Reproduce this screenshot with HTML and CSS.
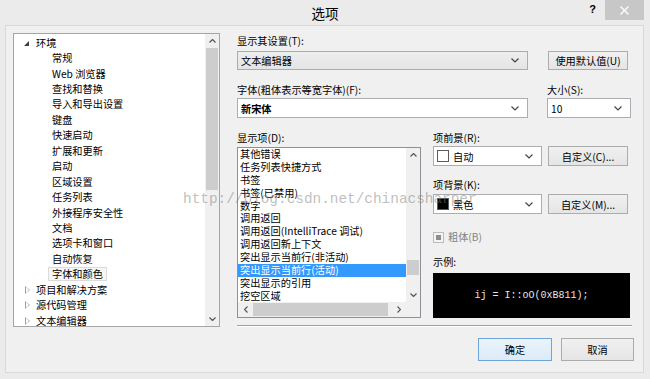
FILE: index.html
```html
<!DOCTYPE html>
<html lang="zh-CN">
<head>
    <meta charset="UTF-8">
    <title>选项</title>
    <link rel="stylesheet" href="styles.css">
</head>
<body>
    <div class="window">
        <div class="titlebar">
            <span class="title">选项</span>
            <div class="caption-buttons">
                <span class="help">?</span>
                <span class="close">
                    <svg width="9" height="9" viewBox="0 0 9 9"><path d="M0.5 0.5 L8.5 8.5 M8.5 0.5 L0.5 8.5" stroke="#fff" stroke-width="1.3" fill="none"/></svg>
                </span>
            </div>
        </div>

        <div class="client">
            <div class="main">
                <div class="tree">
                    <ul class="tree-items">
                        <li class="root"><span class="arrow open"></span>环境</li>
                        <li class="child"><span class="node">常规</span></li>
                        <li class="child"><span class="node">Web 浏览器</span></li>
                        <li class="child"><span class="node">查找和替换</span></li>
                        <li class="child"><span class="node">导入和导出设置</span></li>
                        <li class="child"><span class="node">键盘</span></li>
                        <li class="child"><span class="node">快速启动</span></li>
                        <li class="child"><span class="node">扩展和更新</span></li>
                        <li class="child"><span class="node">启动</span></li>
                        <li class="child"><span class="node">区域设置</span></li>
                        <li class="child"><span class="node">任务列表</span></li>
                        <li class="child"><span class="node">外接程序安全性</span></li>
                        <li class="child"><span class="node">文档</span></li>
                        <li class="child"><span class="node">选项卡和窗口</span></li>
                        <li class="child"><span class="node">自动恢复</span></li>
                        <li class="child"><span class="node selected">字体和颜色</span></li>
                        <li class="root"><span class="arrow closed"></span>项目和解决方案</li>
                        <li class="root"><span class="arrow closed"></span>源代码管理</li>
                        <li class="root"><span class="arrow closed"></span>文本编辑器</li>
                    </ul>
                    <div class="vscroll tree-scroll">
                        <span class="sbtn"><svg width="7" height="4" viewBox="0 0 7 4"><polyline points="0.5,3.5 3.5,0.5 6.5,3.5" stroke="#555" stroke-width="1.2" fill="none"/></svg></span>
                        <div class="track"><div class="thumb"></div></div>
                        <span class="sbtn"><svg width="7" height="4" viewBox="0 0 7 4"><polyline points="0.5,0.5 3.5,3.5 6.5,0.5" stroke="#555" stroke-width="1.2" fill="none"/></svg></span>
                    </div>
                </div>

                <div class="settings">
                    <div class="lbl">显示其设置(T):</div>
                    <div class="pair first">
                        <div class="combo gray">
                            <span>文本编辑器</span>
                            <svg width="8" height="5" viewBox="0 0 8 5"><polyline points="0.5,0.5 4,4 7.5,0.5" stroke="#444" stroke-width="1.2" fill="none"/></svg>
                        </div>
                        <button class="btn wide">使用默认值(U)</button>
                    </div>
                    <div class="pair labels">
                        <span class="lbl">字体(粗体表示等宽字体)(F):</span>
                        <span class="lbl">大小(S):</span>
                    </div>
                    <div class="pair">
                        <div class="combo tall">
                            <span class="bold">新宋体</span>
                            <svg width="8" height="5" viewBox="0 0 8 5"><polyline points="0.5,0.5 4,4 7.5,0.5" stroke="#444" stroke-width="1.2" fill="none"/></svg>
                        </div>
                        <div class="combo tall">
                            <span>10</span>
                            <svg width="8" height="5" viewBox="0 0 8 5"><polyline points="0.5,0.5 4,4 7.5,0.5" stroke="#444" stroke-width="1.2" fill="none"/></svg>
                        </div>
                    </div>

                    <div class="items">
                        <div class="items-left">
                            <div class="lbl">显示项(D):</div>
                            <div class="listbox">
                                <ul class="list-items">
                                    <li>其他错误</li>
                                    <li>任务列表快捷方式</li>
                                    <li>书签</li>
                                    <li>书签(已禁用)</li>
                                    <li>数字</li>
                                    <li>调用返回</li>
                                    <li>调用返回(IntelliTrace 调试)</li>
                                    <li>调用返回新上下文</li>
                                    <li>突出显示当前行(非活动)</li>
                                    <li class="active">突出显示当前行(活动)</li>
                                    <li>突出显示的引用</li>
                                    <li>挖空区域</li>
                                </ul>
                                <div class="vscroll list-scroll">
                                    <span class="sbtn"><svg width="7" height="4" viewBox="0 0 7 4"><polyline points="0.5,3.5 3.5,0.5 6.5,3.5" stroke="#555" stroke-width="1.2" fill="none"/></svg></span>
                                    <div class="track"><div class="thumb"></div></div>
                                    <span class="sbtn"><svg width="7" height="4" viewBox="0 0 7 4"><polyline points="0.5,0.5 3.5,3.5 6.5,0.5" stroke="#555" stroke-width="1.2" fill="none"/></svg></span>
                                </div>
                                <div class="hscroll">
                                    <span class="sbtn"><svg width="4" height="7" viewBox="0 0 4 7"><polyline points="3.5,0.5 0.5,3.5 3.5,6.5" stroke="#555" stroke-width="1.2" fill="none"/></svg></span>
                                    <div class="htrack"><div class="hthumb"></div></div>
                                    <span class="sbtn"><svg width="4" height="7" viewBox="0 0 4 7"><polyline points="0.5,0.5 3.5,3.5 0.5,6.5" stroke="#555" stroke-width="1.2" fill="none"/></svg></span>
                                </div>
                                <div class="corner"></div>
                            </div>
                        </div>

                        <div class="items-right">
                            <div class="lbl">项前景(R):</div>
                            <div class="pair-small">
                                <div class="combo">
                                    <span class="swatch"></span><span>自动</span>
                                    <svg width="8" height="5" viewBox="0 0 8 5"><polyline points="0.5,0.5 4,4 7.5,0.5" stroke="#444" stroke-width="1.2" fill="none"/></svg>
                                </div>
                                <button class="btn">自定义(C)...</button>
                            </div>
                            <div class="lbl gap-top">项背景(K):</div>
                            <div class="pair-small second">
                                <div class="combo">
                                    <span class="swatch black"></span><span>黑色</span>
                                    <svg width="8" height="5" viewBox="0 0 8 5"><polyline points="0.5,0.5 4,4 7.5,0.5" stroke="#444" stroke-width="1.2" fill="none"/></svg>
                                </div>
                                <button class="btn">自定义(M)...</button>
                            </div>
                            <div class="check disabled"><span class="box"></span>粗体(B)</div>
                            <div class="lbl sample-lbl">示例:</div>
                            <div class="sample">ij = I::oO(0xB811);</div>
                        </div>
                    </div>
                    <div class="separator"></div>
                </div>
            </div>

            <div class="footer">
                <button class="btn action default">确定</button>
                <button class="btn action">取消</button>
            </div>
        </div>

        <div class="watermark">http://blog.csdn.net/chinacsharper</div>
    </div>
</body>
</html>
```

FILE: styles.css
```css
body {
    margin: 0;
    background: #ebebeb;
    font-family: "Noto Sans CJK SC", "Noto Sans", sans-serif;
    font-size: 10.2px;
    color: #000;
}
ul {
    list-style: none;
    margin: 0;
    padding: 0;
}
.window {
    position: relative;
    width: 650px;
    height: 379px;
    background: #ebebeb;
    overflow: hidden;
}

/* title bar */
.titlebar {
    height: 25px;
    display: grid;
    grid-template-columns: 1fr auto 1fr;
}
.title {
    grid-column: 2;
    font-size: 13.5px;
    line-height: 27px;
}
.caption-buttons {
    grid-column: 3;
    justify-self: end;
    display: flex;
    align-items: flex-start;
    gap: 9px;
    margin-right: 6px;
}
.help {
    font-family: "Liberation Sans", sans-serif;
    font-weight: bold;
    font-size: 11px;
    line-height: 18px;
}
.close {
    width: 39px;
    height: 20px;
    background: #c7c7c7;
    display: flex;
    align-items: center;
    justify-content: center;
}

/* client area */
.client {
    box-sizing: border-box;
    height: 348px;
    margin: 0 6px 0 5px;
    border: 1px solid #d9d9d9;
    background: #f0f0f0;
    padding: 7px 11px 0 7px;
}
.main {
    display: grid;
    grid-template-columns: 207px 1fr;
    column-gap: 17px;
}

/* tree */
.tree {
    box-sizing: border-box;
    height: 294px;
    border: 1px solid #a5a5a5;
    background: #fff;
    display: flex;
}
.tree-items {
    flex: 1;
    padding-top: 1px;
    overflow: hidden;
}
.tree-items li {
    height: 15.44px;
    line-height: 15.44px;
    white-space: nowrap;
    display: flex;
    align-items: center;
}
.root {
    padding-left: 9px;
}
.arrow {
    width: 10px;
    height: 8px;
    margin-right: 3px;
}
.arrow.open::before {
    content: "";
    display: block;
    width: 0;
    height: 0;
    margin: 2px 0 0 1px;
    border-style: solid;
    border-width: 0 0 5px 5px;
    border-color: transparent transparent #404040 transparent;
}
.arrow.closed::before {
    content: "";
    display: block;
    width: 0;
    height: 0;
    margin: 0 0 0 2px;
    border-style: solid;
    border-width: 4px 0 4px 5px;
    border-color: transparent transparent transparent #a0a0a0;
}
.arrow.closed::after {
    content: "";
    display: block;
    width: 0;
    height: 0;
    margin: -7px 0 0 3px;
    border-style: solid;
    border-width: 3px 0 3px 3px;
    border-color: transparent transparent transparent #fff;
}
.child {
    padding-left: 34px;
}
.node {
    display: inline-block;
    line-height: 12px;
    padding: 0 3px;
    border: 1px solid transparent;
}
.node.selected {
    border-color: #dadada;
    background: #f6f6f6;
}

/* scroll bars */
.vscroll {
    width: 14px;
    background: #f0f0f0;
    display: flex;
    flex-direction: column;
}
.sbtn {
    flex: none;
    height: 14px;
    display: flex;
    align-items: center;
    justify-content: center;
}
.track {
    flex: 1;
}
.thumb {
    margin: 0 1px;
    background: #cdcdcd;
}
.tree-scroll .thumb {
    height: 142px;
}
.list-scroll .thumb {
    margin-top: 98px;
    height: 15px;
}
.hscroll {
    grid-column: 1;
    grid-row: 2;
    background: #f0f0f0;
    display: flex;
}
.hscroll .sbtn {
    width: 15px;
    height: 15px;
}
.htrack {
    flex: 1;
    padding: 1px 0;
}
.hthumb {
    width: 135px;
    height: 13px;
    background: #cdcdcd;
}
.corner {
    grid-column: 2;
    grid-row: 2;
    background: #f0f0f0;
}

/* settings */
.lbl {
    line-height: 16px;
    white-space: nowrap;
}
.pair {
    display: grid;
    grid-template-columns: 291px 84px;
    column-gap: 19px;
}
.pair.first {
    margin-top: 2px;
}
.pair.labels {
    margin-top: 12px;
}
.combo {
    box-sizing: border-box;
    height: 20px;
    border: 1px solid #abadb3;
    background: #fff;
    display: flex;
    align-items: center;
    padding: 0 8px 0 3px;
    white-space: nowrap;
}
.combo span:last-of-type {
    flex: 1;
}
.combo.gray {
    height: 19px;
    border-color: #acacac;
    background: linear-gradient(#eeeeee, #e4e4e4);
}
.bold {
    font-weight: bold;
}
.btn {
    box-sizing: border-box;
    height: 20px;
    padding: 0;
    border: 1px solid #acacac;
    background: linear-gradient(#f0f0f0, #e5e5e5);
    font-family: inherit;
    font-size: inherit;
    color: #000;
}
.btn.wide {
    width: 80px;
    height: 19px;
    margin-left: 1px;
}

.items {
    margin-top: 12px;
    display: grid;
    grid-template-columns: 184px 198px;
    column-gap: 12px;
}
.listbox {
    box-sizing: border-box;
    height: 171px;
    margin-top: 1px;
    border: 1px solid #8d9096;
    background: #fff;
    display: grid;
    grid-template-columns: 1fr 14px;
    grid-template-rows: 1fr 15px;
}
.list-items {
    overflow: hidden;
}
.list-items li {
    height: 12.9px;
    line-height: 12.9px;
    padding-left: 2px;
    white-space: nowrap;
}
.list-items li.active {
    background: #3399ff;
    color: #fff;
}
.pair-small {
    display: grid;
    grid-template-columns: 109px 80px;
    column-gap: 6px;
}
.pair-small.second {
    margin-top: 1px;
}
.gap-top {
    margin-top: 11px;
}
.swatch {
    width: 10px;
    height: 10px;
    border: 1px solid #5a5a5a;
    background: #fff;
    margin-right: 4px;
}
.swatch.black {
    background: #000;
}
.check {
    margin-top: 15px;
    line-height: 16px;
    display: flex;
    align-items: center;
}
.check.disabled {
    color: #838383;
}
.check .box {
    box-sizing: border-box;
    width: 11px;
    height: 11px;
    border: 1px solid #bcbcbc;
    background: #f4f4f4;
    margin-right: 4px;
    padding: 2px;
}
.check .box::before {
    content: "";
    display: block;
    width: 5px;
    height: 5px;
    background: #8c8c8c;
}
.sample-lbl {
    margin-top: 9px;
}
.sample {
    margin-top: 3px;
    width: 197px;
    height: 45px;
    background: #000;
    color: #e6e6e6;
    font-family: "Liberation Mono", monospace;
    font-size: 10px;
    line-height: 45px;
    text-align: center;
    white-space: pre;
}
.separator {
    margin-top: 7px;
    height: 0;
    border-top: 1px solid #a0a0a0;
    border-bottom: 1px solid #fff;
}

/* footer */
.footer {
    margin-top: 11px;
    margin-right: -2px;
    display: flex;
    justify-content: flex-end;
    gap: 9px;
}
.btn.action {
    width: 73px;
    height: 23px;
}
.btn.default {
    width: 74px;
    border-color: #6ea6d8;
    background: linear-gradient(#eaf3fb, #dcebf8);
}

/* watermark */
.watermark {
    position: absolute;
    left: 183px;
    top: 190px;
    font-family: "Liberation Mono", monospace;
    font-size: 14.4px;
    line-height: 18px;
    color: rgba(125, 125, 125, 0.5);
    white-space: nowrap;
    pointer-events: none;
}
```
